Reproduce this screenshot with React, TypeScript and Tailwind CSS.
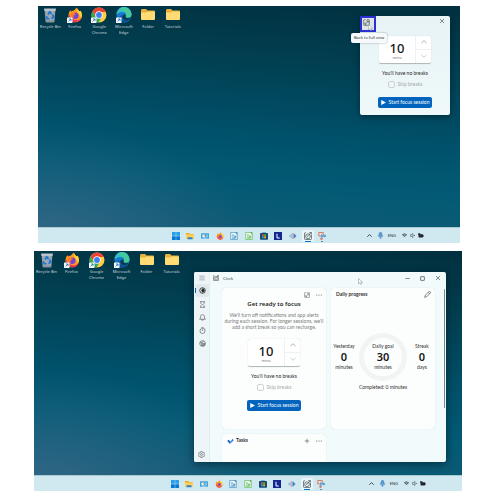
import React from "react";

type P = { className?: string };

const Arrow = () => (
  <g>
    <rect x="0" y="21" width="11" height="11" rx="1" fill="#f4f8fb" />
    <path d="M3 29 L8 24 M4 24 H8 V28" stroke="#1c6fc4" strokeWidth="1.600" fill="none" />
  </g>
);

const RecycleBin = () => (
  <svg viewBox="0 0 32 32" className="size-4">
    <path d="M5 4 H27 L25 29 Q24.800 31 23 31 H9 Q7.200 31 7 29 Z" fill="#8493a0" />
    <path d="M4 3 H28 L27 8 H5 Z" fill="#b9c4cb" />
    <path d="M6 8 H26 L23.500 27 H8.500 Z" fill="#9aa8b3" />
    <path d="M12 15 L15.500 9.500 L19 14 M21 15 L23.500 20 L19 23 M15 23.500 H10.500 L9 18.500" stroke="#1976d2" strokeWidth="3.400" fill="none" strokeLinejoin="round" />
  </svg>
);

const FirefoxMark = () => (
  <g>
    <path d="M30 17 A13.500 13.500 0 1 1 4 12 C4.500 9 6 7 7 6 C7 8 7.500 8.500 8.500 9 C11 7 13 7 14 7 C16 4 18 2 20 1 C20 5 23 6 25 9 L27 7.500 C29 10 30 14 30 17 Z" fill="#ff9a1f" />
    <path d="M4 14 C4 25 10 30.500 17 30.500 C24 30.500 28 26 29.500 21 C25 27 18 28 13 25 C8 22 6 18 4 14 Z" fill="#f5315a" />
    <path d="M20 1 C20 5 23 6 25 9 L27 7.500 C30 12 30.500 18 28 23 C27 15 19 12 20 1 Z" fill="#ffd83a" />
    <circle cx="16.500" cy="17.500" r="6.500" fill="#7542d8" />
    <path d="M8 12 C11 10 14 11 15 13 C19 13 17 16 14 16 C12 18 13 20 15 21 C10 22 6 18 8 12 Z" fill="#ff7a24" />
  </g>
);

const Firefox = () => (
  <svg viewBox="0 0 32 32" className="size-4"><FirefoxMark /><Arrow /></svg>
);

const Chrome = () => (
  <svg viewBox="0 0 32 32" className="size-4">
    <circle cx="16" cy="16" r="15" fill="#ffcd40" />
    <path d="M3 8.500 A15 15 0 0 1 29 8.500 L29.500 10 H16 L9.500 19.500 Z" fill="#ea4335" />
    <path d="M3 8.500 A15 15 0 0 0 15 31 L22 19.500 H9.500 Z" fill="#34a853" />
    <circle cx="16" cy="16" r="7.500" fill="#fff" />
    <circle cx="16" cy="16" r="5.800" fill="#3f7ff0" />
    <Arrow />
  </svg>
);

const Edge = () => (
  <svg viewBox="0 0 32 32" className="size-4">
    <circle cx="16" cy="16" r="15" fill="#1479cf" />
    <path d="M1 15 A15 15 0 0 1 31 14 C31.500 19 28 21.500 24 21.500 C19 21.500 18 19.500 19.500 18 C22 15 19 10 13 10 C7 10 2.500 13 1 15 Z" fill="#36c0c4" />
    <path d="M14 1.200 A15 15 0 0 1 31 15 C31 19 28 21.500 24 21.500 C19 21.500 19 19.500 19.500 18 C22 14 20 6 8 4 Z" fill="#55d17c" opacity="0.600" />
    <path d="M11 17 C10 25 17 29 26 26.500 C22 31.500 14 32 9 29 C4 24 6 18 11 17 Z" fill="#0c4f9c" />
    <path d="M19.500 18 C18 20 20 22 24 22 C26 22 28 21.500 29.500 20.500 C28 25 25 26.800 21 26.800 C15 26.500 11 22 13 17 C15 14 19 14 19.500 18 Z" fill="#063a50" />
    <Arrow />
  </svg>
);

const Folder = () => (
  <svg viewBox="0 0 32 32" className="size-4">
    <path d="M2 7 Q2 4 4 4 H12 L15 7 H28 Q30 7 30 9 V24 H2 Z" fill="#e9b13c" />
    <path d="M2 11 H12 L15 9 H28 Q30 9 30 11 V24 Q30 26 28 26 H4 Q2 26 2 24 Z" fill="#ffdc74" />
  </svg>
);

const desktopIcons = [
  { label: "Recycle Bin", icon: <RecycleBin /> },
  { label: "Firefox", icon: <Firefox /> },
  { label: "Google Chrome", icon: <Chrome /> },
  { label: "Microsoft Edge", icon: <Edge /> },
  { label: "Folder", icon: <Folder /> },
  { label: "Tutorials", icon: <Folder /> },
];

const DesktopIcons = ({ className = "" }: P) => (
  <div className={`grid grid-cols-6 pt-px ${className}`}>
    {desktopIcons.map((d) => (
      <button key={d.label} className="flex flex-col items-center justify-start gap-px font-['Noto_Sans',sans-serif] text-[4px] leading-[6px] text-[#c9d6dc]">
        {d.icon}
        <span className="w-6">{d.label}</span>
      </button>
    ))}
  </div>
);

const Svg = ({ children, className = "size-2" }: P & { children: React.ReactNode }) => (
  <svg viewBox="0 0 16 16" className={className} fill="none" stroke="currentColor" strokeWidth="1.300">{children}</svg>
);

const Doc = ({ color }: { color: string }) => (
  <svg viewBox="0 0 16 16" className="size-2">
    <path d="M1.500 0.800 H10.500 L14.500 4.800 V15.200 H1.500 Z" fill="#f2fafc" stroke={color} strokeWidth="1.300" />
    <path d="M10 0.500 H15 V5.500 Z" fill={color} />
    <path d="M4 5.500 H8 M4 8 H8 M4 10.500 H11.500 M4 13 H11.500" stroke={color} strokeWidth="1.100" />
    <rect x="8.500" y="7" width="4" height="4.500" fill={color} opacity="0.700" />
  </svg>
);

const ClockApp = ({ className = "size-2" }: P) => (
  <Svg className={className}>
    <path d="M4 1.500 H2 Q1 1.500 1 3 V13.500 Q1 15 2.500 15 H13.500 Q15 15 15 13.500 V6" />
    <circle cx="8" cy="8.500" r="4.800" />
    <path d="M5.500 7 L8 9 L13.500 2 M10.500 1 H15 V5" />
  </Svg>
);

const taskbarApps: { name: string; icon: React.ReactNode; state?: string }[] = [
  {
    name: "Start",
    icon: (
      <svg viewBox="0 0 16 16" className="size-2">
        <path d="M0 0 H7.600 V7.600 H0 Z M8.400 0 H16 V7.600 H8.400 Z" fill="#27a0ea" />
        <path d="M0 8.400 H7.600 V16 H0 Z M8.400 8.400 H16 V16 H8.400 Z" fill="#0878d4" />
      </svg>
    ),
  },
  {
    name: "File Explorer",
    icon: (
      <svg viewBox="0 0 16 16" className="size-2">
        <path d="M0 2 H6 L8 4 H15 V14 H0 Z" fill="#f0a81c" />
        <path d="M0 5 H16 V14 H0 Z" fill="#ffd05a" />
        <path d="M3 10.500 H13 V14.500 H3 Z" fill="#2a82cf" />
      </svg>
    ),
  },
  {
    name: "Control Panel",
    icon: (
      <svg viewBox="0 0 16 16" className="size-2">
        <rect y="2.500" width="16" height="11" rx="1" fill="#3fa3dc" />
        <circle cx="5.500" cy="7.500" r="3" fill="#e8f6fb" />
        <path d="M5.500 7.500 V4.500 A3 3 0 0 1 8.500 7.500 Z" fill="#e79a3a" />
        <path d="M10.500 6 H14 M10.500 8.500 H14 M3 12 H13" stroke="#e3f4fb" strokeWidth="1.200" />
      </svg>
    ),
  },
  { name: "Firefox", icon: <svg viewBox="0 0 32 32" className="size-2"><FirefoxMark /></svg> },
  { name: "Writer", icon: <Doc color="#2f86bd" /> },
  { name: "Calc", icon: <Doc color="#4fb43c" /> },
  {
    name: "Store",
    icon: (
      <svg viewBox="0 0 16 16" className="size-2">
        <path d="M5 3 V1 H11 V3" fill="none" stroke="#3283b8" strokeWidth="1.200" />
        <rect y="2" width="16" height="13.500" rx="1.500" fill="#174a78" />
        <path d="M4 5 H7.600 V8.300 H4 Z" fill="#f05a28" />
        <path d="M8.400 5 H12 V8.300 H8.400 Z" fill="#7fba00" />
        <path d="M4 9.100 H7.600 V12.400 H4 Z" fill="#27a8f0" />
        <path d="M8.400 9.100 H12 V12.400 H8.400 Z" fill="#ffb900" />
      </svg>
    ),
  },
  {
    name: "Launcher",
    icon: (
      <svg viewBox="0 0 16 16" className="size-2">
        <rect width="16" height="16" fill="#13268f" />
        <path d="M6 3.500 V12 H11.500" fill="none" stroke="#fff" strokeWidth="2" />
      </svg>
    ),
  },
  {
    name: "Audio editor",
    icon: (
      <svg viewBox="0 0 16 16" className="size-2" strokeWidth="1.500">
        <path d="M1.500 6.500 V9.500 M4 4.500 V11.500" stroke="#5b9fd6" />
        <path d="M6.500 2 V14" stroke="#d87f86" />
        <path d="M9 2 V14 L15 8 Z" fill="#3e7fc4" />
      </svg>
    ),
  },
  { name: "Clock", icon: <ClockApp />, state: "active" },
  {
    name: "Snipping Tool",
    state: "open",
    icon: (
      <svg viewBox="0 0 16 16" className="size-2" fill="none" strokeWidth="1.700">
        <path d="M1.500 1 H10.500 V8 H1.500 Z" stroke="#df6848" />
        <path d="M7 8 L15.500 8 M7.500 4 V13" stroke="#3aa1d8" />
        <circle cx="7" cy="13.500" r="1.700" stroke="#c85b4a" />
        <circle cx="13.500" cy="8" r="1.700" stroke="#2f95d2" />
      </svg>
    ),
  },
];

const Taskbar = () => (
  <footer className="grid h-4 shrink-0 grid-cols-[1fr_auto_1fr] items-center border-t border-[#a9c9d5] bg-[#d0e8f0]">
    <span />
    <nav className="grid w-[161px] grid-cols-11">
      {taskbarApps.map((a) => (
        <button key={a.name} aria-label={a.name} className="flex justify-center">
          <span className={a.state === "active" ? "flex h-3 w-3 flex-col items-center rounded-xs bg-[#eaf5f9] pt-0.5 text-[#3b4246]" : "flex h-3 w-3 flex-col items-center pt-0.5"}>
            {a.icon}
            {a.state === "active" && <span className="mt-px h-px w-1.5 shrink-0 bg-[#1173c9]" />}
            {a.state === "open" && <span className="mt-px h-px w-0.5 shrink-0 bg-[#6f8b98]" />}
          </span>
        </button>
      ))}
    </nav>
    <div className="flex items-center justify-end pr-9 text-[#20282c]">
      <Svg className="mr-[5px] size-[5px]"><path d="M1 12 L8 5 L15 12" strokeWidth="2.600" /></Svg>
      <svg viewBox="0 0 16 16" className="mr-1 size-[7px]" fill="none" stroke="#3d7fc0" strokeWidth="1.600">
        <rect x="5" y="1" width="6" height="9" rx="3" fill="#5f9bd2" />
        <path d="M2.500 7 Q3 12.500 8 12.500 Q13 12.500 13.500 7 M8 12.500 V16" />
      </svg>
      <span className="mr-1.5 font-['Noto_Sans',sans-serif] text-[4px] leading-[6px]">ENG</span>
      <Svg className="mr-[3px] size-[5px]">
        <path d="M0 6 Q8 -1 16 6 M3 9 Q8 4.500 13 9 M6 12 Q8 10 10 12" strokeWidth="2.200" />
      </Svg>
      <Svg className="mr-[3px] size-[5px]">
        <path d="M1 5.500 H4 L9 1.500 V14.500 L4 10.500 H1 Z M11.500 6 L15.500 10 M15.500 6 L11.500 10" strokeWidth="1.500" />
      </Svg>
      <svg viewBox="0 0 18 16" className="h-[5px] w-1.5">
        <rect x="1" y="4" width="15" height="10" rx="2" fill="currentColor" />
        <path d="M0 1 H7 V6 H0 Z M16 7 H18 V11 H16 Z" fill="currentColor" />
      </svg>
    </div>
  </footer>
);

const CompactIcon = ({ className = "size-1.5" }: P) => (
  <Svg className={className}>
    <path d="M6 1.500 H3 Q1.500 1.500 1.500 3 V13 Q1.500 14.500 3 14.500 H13 Q14.500 14.500 14.500 13 V3 Q14.500 1.500 13 1.500 H9" />
    <path d="M5 12 L12 4.500 M7.500 4.500 H12 V9 M4.500 8 V12 H8" />
  </Svg>
);

const Dots = () => (
  <svg viewBox="0 0 16 16" className="size-1.5" fill="currentColor">
    <circle cx="2" cy="8" r="1.400" /><circle cx="8" cy="8" r="1.400" /><circle cx="14" cy="8" r="1.400" />
  </svg>
);

const Close = () => <Svg className="size-1.5"><path d="M2.500 2.500 L13.500 13.500 M13.500 2.500 L2.500 13.500" strokeWidth="1.500" /></Svg>;

const Cursor = ({ className = "" }: P) => (
  <svg viewBox="0 0 12 16" className={`pointer-events-none absolute h-[7px] w-[5px] ${className}`}>
    <path d="M1 0.800 V13.500 L4.200 10.800 L6.500 15 L8.800 14 L6.800 10 L11 9.800 Z" fill="#fff" stroke="#7d888d" strokeWidth="1.200" />
  </svg>
);

const FocusForm = ({ id }: { id: string }) => (
  <div className="flex flex-col items-center">
    <div className="grid h-7 w-[52px] grid-cols-[37px_15px] rounded-xs border-b border-[#b4babc] bg-white shadow-[0_0_1px_#b8c4c8]">
      <label className="flex flex-col items-center justify-center border-r border-[#edf1f2] font-['Noto_Sans',sans-serif] text-[4px] leading-[5px] text-[#777]">
        <input aria-label="Minutes" defaultValue="10" className="mt-0.5 h-3.5 w-full bg-transparent text-center text-[13px] leading-[14px] font-medium text-[#161616]" />
        mins
      </label>
      <div className="grid grid-rows-2">
        <button aria-label="Increase" className="flex items-center justify-center border-b border-[#edf1f2] text-[#777]">
          <Svg className="size-1.5"><path d="M1 11 L8 4.500 L15 11" strokeWidth="1.500" /></Svg>
        </button>
        <button aria-label="Decrease" className="flex items-center justify-center text-[#a5a5a5]">
          <Svg className="size-1.5"><path d="M1 5 L8 11.500 L15 5" strokeWidth="1.500" /></Svg>
        </button>
      </div>
    </div>
    <p className="mt-1.5 text-[5px] leading-[7px] text-[#1f1f1f]">You'll have no breaks</p>
    <div className="mt-1 flex items-center gap-[3px] text-[5px] leading-[7px] text-[#a3a9ab]">
      <input id={id} type="checkbox" className="size-[7px] appearance-none rounded-xs border border-[#cdd3d5]" />
      <label htmlFor={id}>Skip breaks</label>
    </div>
    <button className="mt-[9px] flex h-[11px] w-[54px] items-center justify-center gap-[3px] rounded-xs bg-[#0364bd] text-[5px] leading-[7px] whitespace-nowrap text-white">
      <svg viewBox="0 0 10 10" className="size-[5px]"><path d="M0.500 0 L10 5 L0.500 10 Z" fill="#fff" /></svg>
      Start focus session
    </button>
  </div>
);

const MiniWindow = () => (
  <section className="absolute top-2.5 right-2.5 w-[90px] rounded-xs bg-[#ebf5f8] bg-linear-to-b from-[#e8f3f7] to-[#eff9f9] pb-[7px] shadow-[0_2px_6px_rgba(0,20,30,0.5)]">
    <header className="flex items-start justify-between text-[#333]">
      <button aria-label="Back to full view" className="flex size-4 border-2 border-[#2a30d2] bg-[#dde5e8] pt-px pl-px">
        <CompactIcon className="size-[7px]" />
      </button>
      <button aria-label="Close" className="mt-0.5 mr-[5px]"><Close /></button>
    </header>
    <Cursor className="top-2 left-2" />
    <div className="pt-1"><FocusForm id="skip-mini" /></div>
    <div role="tooltip" className="absolute top-[17px] -left-[9px] rounded-xs bg-[#f6fafb] px-[3px] py-px font-['Noto_Sans',sans-serif] text-[4px] leading-2 whitespace-nowrap text-[#333] shadow-[0_0_2px_rgba(0,30,40,0.45)]">
      Back to full view
    </div>
  </section>
);

const sideItems = [
  { name: "Focus sessions", icon: <Svg className="size-[7px]"><circle cx="8" cy="8" r="6.300" strokeWidth="1.800" /><path d="M8 4 A4 4 0 0 1 8 12 L6 8 Z" fill="currentColor" /></Svg> },
  { name: "Timer", icon: <Svg className="size-[7px]"><path d="M2.500 1.500 H13.500 M2.500 14.500 H13.500 M4 1.500 V5 L7 8 L4 11 V14.500 M12 1.500 V5 L9 8 L12 11 V14.500" /></Svg> },
  { name: "Alarm", icon: <Svg className="size-[7px]"><path d="M1.500 12 L3.500 9 V6 A4.500 4.500 0 0 1 12.500 6 V9 L14.500 12 Z M6 12.500 A2 2 0 0 0 10 12.500" /></Svg> },
  { name: "Stopwatch", icon: <Svg className="size-[7px]"><circle cx="8" cy="9" r="5.800" /><path d="M8 5.500 V9 M5.500 1 H10.500 M12.500 3.500 L14 5" /></Svg> },
  { name: "World clock", icon: <Svg className="size-[7px]"><circle cx="8" cy="8" r="6.500" /><path d="M2 6 H8 L10 1.500 M5 6 L6.500 14 M8 8 H14 L12 13 H8 Z M10.500 9 V11 H12" /></Svg> },
];

const Stat = ({ top, value, bottom }: { top: string; value: string; bottom: string }) => (
  <div className="flex flex-col items-center text-[5px] leading-[7px] whitespace-nowrap text-[#303030]">
    <span>{top}</span>
    <strong className="py-px font-['Noto_Sans',sans-serif] text-[11px] leading-3 font-semibold text-[#161616]">{value}</strong>
    <span>{bottom}</span>
  </div>
);

const ClockWindow = () => (
  <section className="absolute inset-x-4 top-[21px] bottom-[13px] ml-36 flex overflow-hidden rounded-xs bg-[#f2fbfb] shadow-[0_2px_8px_rgba(0,20,30,0.6)]">
    <nav className="flex w-4 shrink-0 flex-col items-center border-r border-[#e3eef1] bg-[#edf5f8] pb-1 text-[#454d50]">
      <button aria-label="Menu" className="mt-[3px] mb-[3px] text-[#7a8387]">
        <Svg className="size-1.5"><path d="M1 3 H15 M1 8 H15 M1 13 H15" strokeWidth="1.600" /></Svg>
      </button>
      {sideItems.map((s, i) => (
        <button key={s.name} aria-label={s.name} className={i === 0 ? "mb-px flex h-[13px] w-3.5 items-center rounded-xs bg-[#e0e9ec] text-[#222]" : "flex h-[13px] w-3.5 items-center"}>
          <span className={i === 0 ? "h-[5px] w-px bg-[#0364bd]" : "h-[5px] w-px"} />
          <span className="ml-[3px]">{s.icon}</span>
        </button>
      ))}
      <button aria-label="Settings" className="mt-auto">
        <Svg className="size-[7px]">
          <circle cx="8" cy="8" r="2.200" />
          <path d="M6.500 1 H9.500 L10 3 L12 4 L14 3.500 L15.300 6 L13.800 8 L15.300 10 L14 12.500 L12 12 L10 13 L9.500 15 H6.500 L6 13 L4 12 L2 12.500 L0.700 10 L2.200 8 L0.700 6 L2 3.500 L4 4 L6 3 Z" />
        </Svg>
      </button>
    </nav>
    <div className="flex min-w-0 flex-1 flex-col">
      <header className="flex h-3 items-center pr-[5px] pl-[3px] text-[#333]">
        <ClockApp className="size-1.5" />
        <h1 className="ml-1 flex-1 font-['Noto_Sans',sans-serif] text-[4px] leading-[7px]">Clock</h1>
        <button aria-label="Minimize"><Svg className="size-[5px]"><path d="M1 8 H15" strokeWidth="1.800" /></Svg></button>
        <button aria-label="Maximize" className="mx-2.5"><Svg className="size-[5px]"><rect x="2" y="2" width="12" height="12" rx="1" strokeWidth="2" /></Svg></button>
        <button aria-label="Close"><Close /></button>
      </header>
      <main className="grid min-h-0 flex-1 grid-cols-2 grid-rows-[141px_auto] content-start gap-x-[5px] gap-y-[5px] pt-1 pr-[11px] pl-3">
        <article className="rounded-sm bg-[#fcfefe] shadow-[0_0_1px_#bccdd1]">
          <div className="flex justify-end gap-1.5 pt-1 pr-1 text-[#555]">
            <button aria-label="Compact view"><CompactIcon /></button>
            <button aria-label="More focus options"><Dots /></button>
          </div>
          <h2 className="mt-0.5 text-center font-['Noto_Sans',sans-serif] text-[6px] leading-[9px] font-semibold text-[#1c1c1c]">Get ready to focus</h2>
          <p className="mt-[3px] mb-[9px] text-center text-[5px] leading-[6px] whitespace-nowrap text-[#7b7b7b]">
            We'll turn off notifications and app alerts<br />
            during each session. For longer sessions, we'll<br />
            add a short break so you can recharge.
          </p>
          <FocusForm id="skip-main" />
        </article>
        <article className="rounded-sm bg-[#fcfefe] shadow-[0_0_1px_#bccdd1]">
          <div className="flex items-center justify-between py-[3px] pr-1 pl-[5px] text-[#333]">
            <h2 className="text-[5px] leading-[7px] font-bold">Daily progress</h2>
            <button aria-label="Edit daily goal">
              <Svg className="size-[7px]"><path d="M1.500 14.500 L3 9.500 L11.500 1.500 Q13 0.500 14.500 2 Q15.500 3.500 14.500 4.500 L6.500 13 Z M10 3.500 L13 6.500" /></Svg>
            </button>
          </div>
          <div className="mt-8 grid grid-cols-[26px_1fr_26px] items-center justify-items-center">
            <Stat top="Yesterday" value="0" bottom="minutes" />
            <div className="flex size-12 items-center justify-center rounded-full border-[5px] border-[#f2f4f4]">
              <Stat top="Daily goal" value="30" bottom="minutes" />
            </div>
            <Stat top="Streak" value="0" bottom="days" />
          </div>
          <p className="mt-[3px] text-center text-[5px] leading-[7px] text-[#303030]">Completed: 0 minutes</p>
        </article>
        <article className="h-10 rounded-sm bg-[#fcfefe] shadow-[0_0_1px_#bccdd1]">
          <div className="flex items-center py-[3px] pr-1 pl-[5px] text-[#444]">
            <svg viewBox="0 0 16 14" className="h-1.5 w-[7px]">
              <path d="M0.500 7 L3.500 4 L8 8.500 L5.500 12 Z" fill="#174fa8" />
              <path d="M5 12 L13 2 L16 5 L8 13 Q6.500 14 5 12 Z" fill="#2f91ef" />
            </svg>
            <h2 className="ml-0.5 flex-1 text-[5px] leading-[7px] font-bold text-[#333]">Tasks</h2>
            <button aria-label="Add task"><Svg className="size-1.5"><path d="M8 2 V14 M2 8 H14" strokeWidth="1.500" /></Svg></button>
            <button aria-label="More task options" className="ml-1.5"><Dots /></button>
          </div>
        </article>
      </main>
    </div>
    <span className="absolute top-[17px] right-px h-[119px] w-px rounded-full bg-[#7d8587]" />
    <Cursor className="top-1.5 left-[164px]" />
  </section>
);

const wallpaper =
  "flex flex-col bg-[radial-gradient(ellipse_at_0%_100%,rgba(72,112,146,0.6),transparent_36%),linear-gradient(184deg,#01303f_0%,#013f51_25%,#00526c_55%,#035a74_72%,#165a76_100%)]";

export default function App() {
  return (
    <div className="flex flex-col gap-2 bg-white pt-1.5 pb-[9px] font-[Lato,sans-serif]">
      <section className={`relative mr-10 ml-[38px] aspect-[422/237] ${wallpaper}`}>
        <div className="flex-1"><DesktopIcons className="w-[147px]" /></div>
        <MiniWindow />
        <Taskbar />
      </section>
      <section className={`mr-[38px] ml-[34px] aspect-[428/240] ${wallpaper}`}>
        <div className="relative flex-1">
          <DesktopIcons className="w-[150px]" />
          <ClockWindow />
        </div>
        <Taskbar />
      </section>
    </div>
  );
}
